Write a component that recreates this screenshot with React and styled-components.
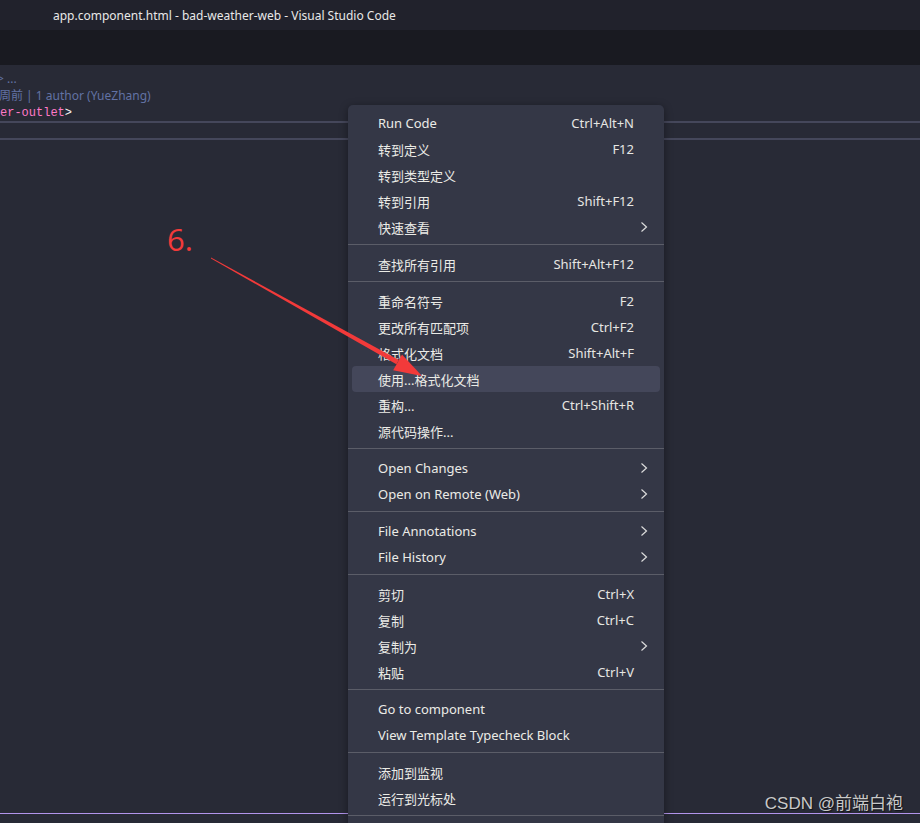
import React from 'react';
import styled, { createGlobalStyle } from 'styled-components';

const GlobalStyle = createGlobalStyle`
  html, body {
    margin: 0;
    padding: 0;
    background: #282a36;
    overflow: hidden;
  }
  * { box-sizing: border-box; }
`;

const UI_FONT = `"Noto Sans", "Open Sans", "Noto Sans CJK SC", sans-serif`;

const menuSections = [
  [
    { label: 'Run Code', keys: 'Ctrl+Alt+N' },
    { label: '转到定义', keys: 'F12' },
    { label: '转到类型定义' },
    { label: '转到引用', keys: 'Shift+F12' },
    { label: '快速查看', sub: true },
  ],
  [{ label: '查找所有引用', keys: 'Shift+Alt+F12' }],
  [
    { label: '重命名符号', keys: 'F2' },
    { label: '更改所有匹配项', keys: 'Ctrl+F2' },
    { label: '格式化文档', keys: 'Shift+Alt+F' },
    { label: '使用...格式化文档', active: true },
    { label: '重构...', keys: 'Ctrl+Shift+R' },
    { label: '源代码操作...' },
  ],
  [
    { label: 'Open Changes', sub: true },
    { label: 'Open on Remote (Web)', sub: true },
  ],
  [
    { label: 'File Annotations', sub: true },
    { label: 'File History', sub: true },
  ],
  [
    { label: '剪切', keys: 'Ctrl+X' },
    { label: '复制', keys: 'Ctrl+C' },
    { label: '复制为', sub: true },
    { label: '粘贴', keys: 'Ctrl+V' },
  ],
  [
    { label: 'Go to component' },
    { label: 'View Template Typecheck Block' },
  ],
  [
    { label: '添加到监视' },
    { label: '运行到光标处' },
  ],
];

const Chevron = () => (
  <svg width="8" height="12" viewBox="0 0 8 12">
    <polyline points="1.5,1.5 6.5,6 1.5,10.5" fill="none" stroke="#dcdcdc" strokeWidth="1.2" />
  </svg>
);

export default function App() {
  return (
    <>
      <GlobalStyle />
      <Window>
        <TitleBar>app.component.html - bad-weather-web - Visual Studio Code</TitleBar>
        <TabBand />
        <Editor>
          <CodeArea>
            <LensLine indent={-3}>&gt; ...</LensLine>
            <LensLine indent={-1}>周前 | 1 author (YueZhang)</LensLine>
            <CodeLine>
              <Tag>er-outlet</Tag>
              <Punct>&gt;</Punct>
            </CodeLine>
            <Rule />
            <Rule gap />
          </CodeArea>
          <BottomEdge />
          <BottomPad />
        </Editor>

        <StepLabel>6.</StepLabel>
        <ArrowSvg width="920" height="823" viewBox="0 0 920 823">
          <polygon points="211,257.5 398.8,359.9 396.4,364.3 211,258.5" fill="#f23a3a" />
          <polygon points="422,376 402,354.5 393.2,370.2" fill="#f23a3a" />
        </ArrowSvg>

        <Menu>
          {menuSections.map((section, si) => (
            <React.Fragment key={si}>
              {si > 0 && <Separator />}
              {section.map((item) => (
                <Item key={item.label} active={item.active}>
                  <Label>{item.label}</Label>
                  <Keys>{item.keys}</Keys>
                  <SubSlot>{item.sub && <Chevron />}</SubSlot>
                </Item>
              ))}
            </React.Fragment>
          ))}
          <Separator />
          <MenuTail />
        </Menu>

        <Watermark>CSDN @前端白袍</Watermark>
      </Window>
    </>
  );
}

const Window = styled.div`
  position: relative;
  width: 920px;
  height: 823px;
  overflow: hidden;
  font-family: ${UI_FONT};
`;

const TitleBar = styled.div`
  height: 30px;
  background: #21222c;
  color: #e8e8e8;
  font-size: 12px;
  line-height: 30px;
  padding: 1px 0 0 53px;
`;

const TabBand = styled.div`
  height: 35px;
  background: #191a21;
`;

const Editor = styled.div`
  background: #282a36;
`;

const CodeArea = styled.div`
  height: 748px;
  padding-top: 5px;
`;

const LensLine = styled.div`
  height: 17px;
  line-height: 17px;
  font-size: 12px;
  color: #6272a4;
  white-space: nowrap;
  margin-left: ${(p) => p.indent}px;
`;

const CodeLine = styled.div`
  height: 17px;
  line-height: 17px;
  font-family: "Liberation Mono", "DejaVu Sans Mono", monospace;
  font-size: 12px;
  white-space: nowrap;
  padding-top: 1px;
`;

const Tag = styled.span`
  color: #ff79c6;
`;

const Punct = styled.span`
  color: #f8f8f2;
`;

const Rule = styled.div`
  height: 2px;
  background: #45475b;
  margin-top: ${(p) => (p.gap ? 15 : 0)}px;
`;

const BottomEdge = styled.div`
  height: 1px;
  background: #b294ec;
`;

const BottomPad = styled.div`
  height: 9px;
`;

const StepLabel = styled.div`
  position: absolute;
  left: 167px;
  top: 219px;
  font-family: "Open Sans", "Noto Sans", sans-serif;
  font-size: 31px;
  line-height: 40px;
  color: #f23a3a;
`;

const ArrowSvg = styled.svg`
  position: absolute;
  left: 0;
  top: 0;
  pointer-events: none;
  z-index: 3;
`;

const Menu = styled.div`
  position: absolute;
  left: 348px;
  top: 105px;
  width: 316px;
  padding: 5px 0;
  background: #343746;
  border-radius: 5px;
  box-shadow: 0 2px 8px rgba(0, 0, 0, 0.4);
  z-index: 2;
`;

const Item = styled.div`
  display: flex;
  align-items: center;
  height: 26px;
  margin: 0 4px;
  padding-left: 26px;
  border-radius: 4px;
  background: ${(p) => (p.active ? '#44475a' : 'transparent')};
  color: #ebebe6;
  font-size: 13px;
  white-space: nowrap;
`;

const Label = styled.span`
  flex: 1;
`;

const Keys = styled.span`
  color: #e6e6e2;
`;

const SubSlot = styled.span`
  width: 26px;
  display: flex;
  align-items: center;
  padding-left: 6px;
`;

const Separator = styled.div`
  height: 1px;
  margin: 4px 0 6px;
  background: #5b5d68;
`;

const MenuTail = styled.div`
  height: 26px;
`;

const Watermark = styled.div`
  position: absolute;
  right: 17px;
  top: 792px;
  font-family: "Liberation Sans", "Noto Sans CJK SC", sans-serif;
  font-size: 17px;
  line-height: 24px;
  color: #c9c9c9;
  text-shadow: 1px 1px 1px rgba(0, 0, 0, 0.6);
  z-index: 4;
`;
